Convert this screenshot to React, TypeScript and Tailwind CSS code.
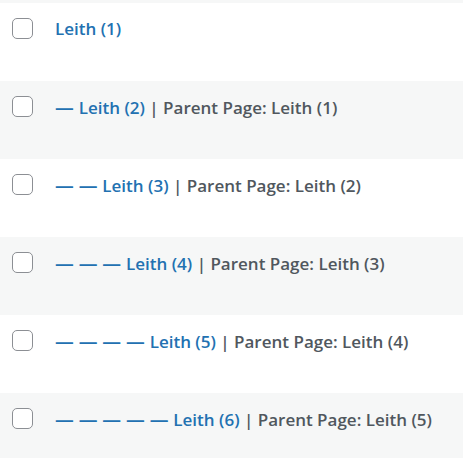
import React from "react";

const rows = [
  { level: 0, n: 1 },
  { level: 1, n: 2 },
  { level: 2, n: 3 },
  { level: 3, n: 4 },
  { level: 4, n: 5 },
  { level: 5, n: 6 },
];

export default function App() {
  return (
    <div
      className="w-[463px] h-[458px] overflow-hidden bg-[#f6f7f7]"
      style={{ fontFamily: '"Open Sans", "Noto Sans", sans-serif' }}
    >
      <div className="h-[3px] bg-[#f6f7f7]" />
      {rows.map((r, i) => (
        <div
          key={r.n}
          className={`h-[78px] flex items-start ${i % 2 === 0 ? "bg-white" : "bg-[#f6f7f7]"}`}
        >
          <div className="pl-[12px] pt-[15px] w-[55px] shrink-0">
            <div className="w-[21px] h-[21px] rounded-[5px] border border-[#8c8f94] bg-white" />
          </div>
          <div className="pt-[12px] text-[17px] font-semibold leading-[28px] whitespace-nowrap">
            <span className="text-[#2271b1]">
              {r.level > 0 && (
                <span className="text-[18.8px]">
                  {Array(r.level).fill("—").join(" ") + " "}
                </span>
              )}
              Leith ({r.n})
            </span>
            {r.level > 0 && (
              <span className="text-[#50575e]"> | Parent Page: Leith ({r.n - 1})</span>
            )}
          </div>
        </div>
      ))}
    </div>
  );
}
